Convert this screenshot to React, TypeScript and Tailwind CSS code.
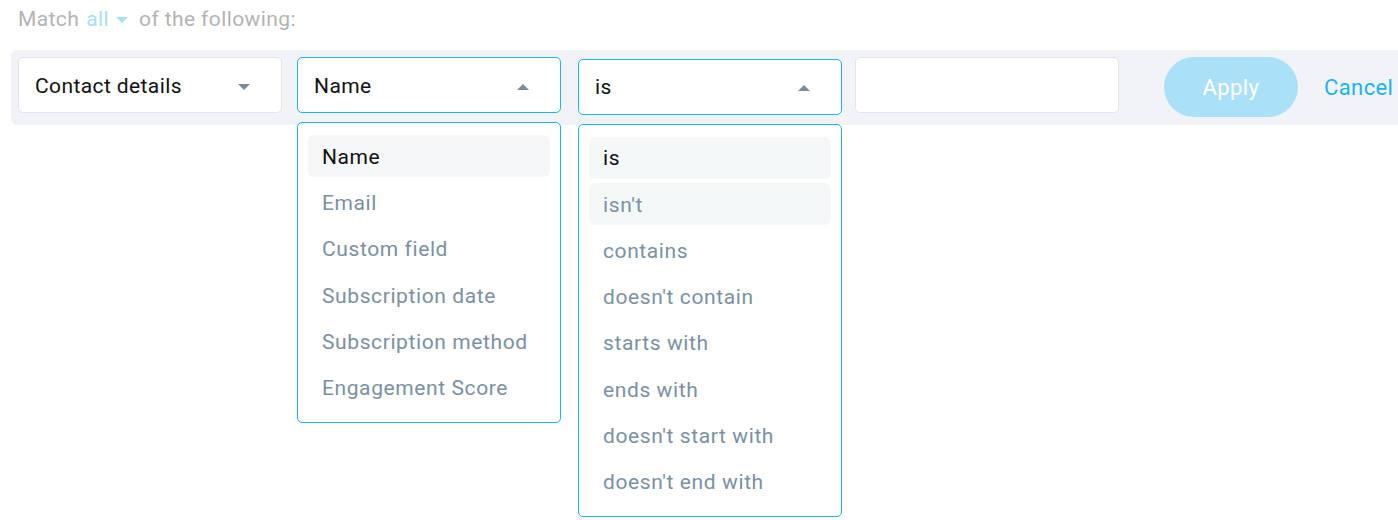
import { useState } from "react";

const fields = ["Name", "Email", "Custom field", "Subscription date", "Subscription method", "Engagement Score"];
const operators = ["is", "isn't", "contains", "doesn't contain", "starts with", "ends with", "doesn't start with", "doesn't end with"];

function Caret({ up = false }: { up?: boolean }) {
    return (
        <svg width="12" height="6" viewBox="0 0 12 6" className="shrink-0">
            {up ? <path d="M0 6 L6 0 L12 6 Z" fill="#7d8b98" /> : <path d="M0 0 L6 6 L12 0 Z" fill="#7d8b98" />}
        </svg>
    );
}

export default function App() {
    const [field, setField] = useState("Name");
    const [op, setOp] = useState("is");

    return (
        <div className="w-[1398px] h-[520px] bg-white overflow-hidden font-['Roboto',sans-serif]">
            {/* Match line */}
            <div className="pl-[18px] pt-[4px] h-[50px] text-[21px] text-[#b3b3b3] flex items-start gap-[7px] tracking-[0.4px]">
                <span>Match</span>
                <span className="flex items-center gap-[7px] text-[#a9dff6]">
                    all
                    <svg width="12" height="6" viewBox="0 0 12 6">
                        <path d="M0 0 L6 6 L12 0 Z" fill="#a9dff6" />
                    </svg>
                </span>
                <span className="ml-[4px]">of the following:</span>
            </div>

            {/* Filter bar */}
            <div className="ml-[11px] h-[75px] bg-[#f2f3f6] rounded-l-[6px] flex items-start pt-[7px] pl-[7px] text-[21px] tracking-[0.4px]">
                <div className="w-[264px] h-[56px] bg-white border border-[#e2e4e8] rounded-[5px] flex items-center justify-between pl-[16px] pr-[31px] pt-[3px] text-[#111]">
                    <span>Contact details</span>
                    <Caret />
                </div>

                <div className="relative ml-[15px]">
                    <div className="w-[264px] h-[56px] bg-white border border-[#1ab6f0] rounded-[5px] flex items-center justify-between pl-[16px] pr-[31px] pt-[3px] text-[#111]">
                        <span>{field}</span>
                        <Caret up />
                    </div>
                    <div className="absolute left-0 top-[65px] w-[264px] bg-white border border-[#1ab6f0] rounded-[5px] px-[10px] pt-[12px] pb-[14px] flex flex-col gap-[4.3px] z-10">
                        {fields.map((f) => (
                            <button
                                key={f}
                                onClick={() => setField(f)}
                                className={`h-[42px] rounded-[6px] pl-[14px] pt-[3px] text-left text-[21px] tracking-[0.6px] ${f === field ? "bg-[#f5f7f9] text-[#111]" : "text-[#7b90a2]"}`}
                            >
                                {f}
                            </button>
                        ))}
                    </div>
                </div>

                <div className="relative ml-[17px] mt-[2px]">
                    <div className="w-[264px] h-[56px] bg-white border border-[#1ab6f0] rounded-[5px] flex items-center justify-between pl-[16px] pr-[31px] pt-[2px] text-[#111]">
                        <span>{op}</span>
                        <Caret up />
                    </div>
                    <div className="absolute left-0 top-[65px] w-[264px] bg-white border border-[#1ab6f0] rounded-[5px] px-[10px] pt-[12px] pb-[13px] flex flex-col gap-[4.3px] z-10">
                        {operators.map((o, i) => (
                            <button
                                key={o}
                                onClick={() => setOp(o)}
                                className={`h-[42px] rounded-[6px] pl-[14px] pt-[2px] text-left text-[21px] tracking-[0.6px] ${o === op ? "bg-[#f5f8f9] text-[#111]" : i === 1 ? "bg-[#f5f8f9] text-[#7b90a2]" : "text-[#7b90a2]"}`}
                            >
                                {o}
                            </button>
                        ))}
                    </div>
                </div>

                <input className="ml-[13px] w-[264px] h-[56px] bg-white border border-[#e2e4e8] rounded-[5px] px-[14px] outline-none" />

                <button className="ml-[45px] w-[134px] h-[60px] rounded-full bg-[#abe1f8] text-white text-[22px]">Apply</button>
                <button className="ml-[26px] h-[60px] text-[#19b3f1] text-[22px]">Cancel</button>
            </div>
        </div>
    );
}
